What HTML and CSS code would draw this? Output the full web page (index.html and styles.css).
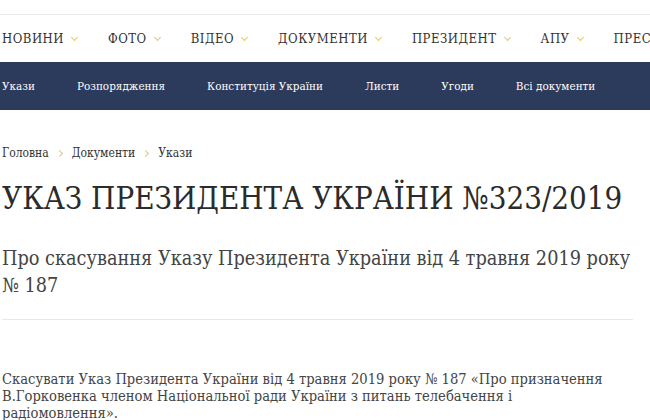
FILE: index.html
```html
<!DOCTYPE html>
<html lang="uk">
<head>
<meta charset="utf-8">
<link rel="stylesheet" href="styles.css">
</head>
<body>
<header class="top">
  <nav class="main-nav">
    <a class="main-item">НОВИНИ <span class="chev"></span></a>
    <a class="main-item">ФОТО <span class="chev"></span></a>
    <a class="main-item">ВІДЕО <span class="chev"></span></a>
    <a class="main-item">ДОКУМЕНТИ <span class="chev"></span></a>
    <a class="main-item">ПРЕЗИДЕНТ <span class="chev"></span></a>
    <a class="main-item">АПУ <span class="chev"></span></a>
    <a class="main-item">ПРЕС-ЦЕНТР <span class="chev"></span></a>
  </nav>
  <nav class="sub-nav">
    <a>Укази</a>
    <a>Розпорядження</a>
    <a>Конституція України</a>
    <a>Листи</a>
    <a>Угоди</a>
    <a>Всі документи</a>
  </nav>
</header>
<main class="content">
  <div class="crumbs">
    <a>Головна</a><span class="sep"></span><a>Документи</a><span class="sep"></span><a>Укази</a>
  </div>
  <h1 class="title">УКАЗ ПРЕЗИДЕНТА УКРАЇНИ №323/2019</h1>
  <h2 class="subtitle">Про скасування Указу Президента України від 4 травня 2019 року № 187</h2>
  <hr class="rule">
  <p class="body">Скасувати Указ Президента України від 4 травня 2019 року № 187 «Про призначення В.Горковенка членом Національної ради України з питань телебачення і радіомовлення».</p>
</main>
</body>
</html>
```
FILE: styles.css
```css
html, body {
  margin: 0;
  padding: 0;
  background: #fff;
  width: 650px;
  height: 420px;
  overflow: hidden;
}
body {
  font-family: "DejaVu Serif Condensed", "DejaVu Serif", serif;
  font-stretch: condensed;
  color: #333;
}
a { color: inherit; text-decoration: none; }
.top {
  padding-top: 14px;
}
.main-nav {
  border-top: 1px solid #ebebeb;
  height: 47px;
  display: flex;
  align-items: center;
  gap: 31px;
  padding-left: 2px;
  white-space: nowrap;
  overflow: hidden;
}
.main-item {
  font-size: 13px;
  letter-spacing: 0.5px;
  color: #333;
  display: flex;
  align-items: center;
  gap: 8px;
  flex-shrink: 0;
}
.chev {
  width: 4px;
  height: 4px;
  border-right: 1.5px solid #e8c766;
  border-bottom: 1.5px solid #e8c766;
  transform: rotate(45deg);
  margin-top: -3px;
}
.sub-nav {
  background: #2c3a5b;
  height: 48px;
  display: flex;
  align-items: center;
  gap: 42px;
  padding-left: 2px;
  white-space: nowrap;
}
.sub-nav a {
  color: #fff;
  font-size: 11.6px;
}
.content {
  padding: 0 17px 0 2px;
}
.crumbs {
  margin-top: 36px;
  font-size: 12px;
  color: #333;
  display: flex;
  align-items: center;
  gap: 8px;
}
.crumbs .sep {
  width: 4px;
  height: 4px;
  border-right: 1.5px solid #e8c766;
  border-top: 1.5px solid #e8c766;
  transform: rotate(45deg);
  margin-right: 2px;
}
.title {
  margin: 18px 0 0;
  font-size: 31px;
  font-weight: normal;
  color: #2b2b2b;
  line-height: 40px;
  white-space: nowrap;
}
.subtitle {
  margin: 27px 0 0;
  font-size: 19.7px;
  font-weight: normal;
  color: #444;
  line-height: 27px;
}
.rule {
  margin: 20px 0 0;
  border: 0;
  border-top: 1px solid #e8e8e8;
}
.body {
  margin: 50px 0 0;
  max-width: 616px;
  font-size: 14.6px;
  line-height: 17px;
  color: #444;
}
```
